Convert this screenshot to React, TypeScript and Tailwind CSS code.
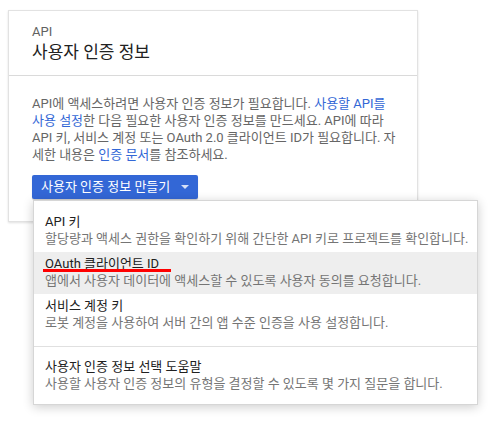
import React from "react";

const font = { fontFamily: "Roboto, 'Noto Sans CJK KR', sans-serif" };

function Item({ title, desc, active, underline }: { title: string; desc: string; active?: boolean; underline?: boolean }) {
  return (
    <div className={"relative h-[42px] pl-[11px] pt-[4px] " + (active ? "bg-[#eeeeee]" : "")}>
      <div className="text-[13px] leading-[16px] text-[#212121] whitespace-nowrap">{title}</div>
      <div className="text-[13px] leading-[17px] text-[#757575] whitespace-nowrap">{desc}</div>
      {underline && <div className="absolute left-[9px] top-[17px] w-[128px] h-[3px] bg-[#ff0000]" />}
    </div>
  );
}

export default function App() {
  return (
    <div className="w-[492px] h-[424px] bg-white pt-[10px] pl-[8px]" style={font}>
      <div className="w-[410px] border border-[#e2e2e2] bg-white shadow-[0_1px_2px_rgba(0,0,0,0.12)]">
        <div className="px-[23px] pt-[13px] pb-[11px] border-b border-[#dadada]">
          <div className="text-[13px] leading-[16px] text-[#616161]">API</div>
          <div className="text-[17px] leading-[24px] text-[#212121]">사용자 인증 정보</div>
        </div>
        <div className="px-[23px] pt-[19px] pb-[22px]">
          <div className="text-[13px] leading-[17px] text-[#666666] whitespace-nowrap">
            <div>
              API에 액세스하려면 사용자 인증 정보가 필요합니다. <span className="text-[#3367d6]">사용할 API를</span>
            </div>
            <div>
              <span className="text-[#3367d6]">사용 설정</span>한 다음 필요한 사용자 인증 정보를 만드세요. API에 따라
            </div>
            <div>API 키, 서비스 계정 또는 OAuth 2.0 클라이언트 ID가 필요합니다. 자</div>
            <div>
              세한 내용은 <span className="text-[#3367d6]">인증 문서</span>를 참조하세요.
            </div>
          </div>
          <div className="relative mt-[12px] w-fit">
            <button className="flex items-center h-[24px] pl-[9px] pr-[9px] bg-[#3367d6] rounded-[2px] text-white text-[13px] leading-[24px] shadow-[0_1px_1px_rgba(0,0,0,0.2)]">
              <span>사용자 인증 정보 만들기</span>
              <svg className="ml-[11px]" width="8" height="4" viewBox="0 0 8 4">
                <path d="M0 0 L8 0 L4 4 Z" fill="rgba(255,255,255,0.8)" />
              </svg>
            </button>
            <div className="absolute left-[1px] top-[25px] z-10 w-[445px] border border-[#d6d6d6] bg-white pt-[9px] pb-[7px] shadow-[0_2px_10px_rgba(0,0,0,0.2)]">
              <Item title="API 키" desc="할당량과 액세스 권한을 확인하기 위해 간단한 API 키로 프로젝트를 확인합니다." />
              <Item title="OAuth 클라이언트 ID" desc="앱에서 사용자 데이터에 액세스할 수 있도록 사용자 동의를 요청합니다." active underline />
              <Item title="서비스 계정 키" desc="로봇 계정을 사용하여 서버 간의 앱 수준 인증을 사용 설정합니다." />
              <div className="mt-[10px] mb-[8px] h-px bg-[#e0e0e0]" />
              <Item title="사용자 인증 정보 선택 도움말" desc="사용할 사용자 인증 정보의 유형을 결정할 수 있도록 몇 가지 질문을 합니다." />
            </div>
          </div>
        </div>
      </div>
    </div>
  );
}
